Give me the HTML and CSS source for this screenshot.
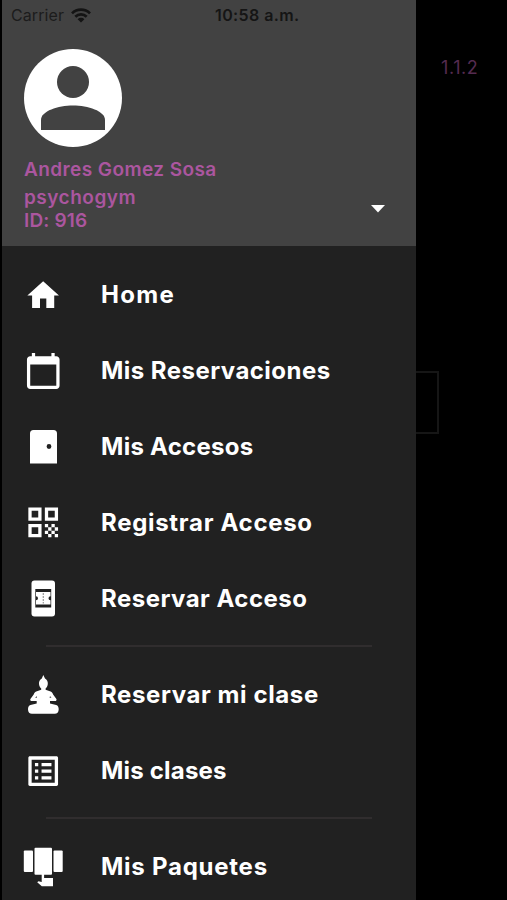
FILE: index.html
```html
<!DOCTYPE html>
<html lang="es">
<head>
<meta charset="utf-8">
<title>Menú</title>
<link rel="stylesheet" href="styles.css">
</head>
<body>
<div class="screen">
  <aside class="drawer">
    <header class="header">
      <div class="status">
        <span class="carrier">Carrier</span>
        <svg class="wifi" width="20" height="15" viewBox="0 0 20 15"><g fill="none" stroke="#141414" stroke-width="2.7"><path d="M1 5.4a12.8 12.8 0 0 1 18 0"/><path d="M4.3 8.8a8.1 8.1 0 0 1 11.4 0"/></g><path fill="#141414" d="M10 14.6 6.6 11.2a4.8 4.8 0 0 1 6.8 0z"/></svg>
        <span class="time">10:58 a.m.</span>
      </div>
      <svg class="avatar" width="98" height="98" viewBox="0 0 98 98"><circle cx="49" cy="49" r="49" fill="#fff"/><g fill="#424242"><circle cx="49" cy="33" r="16"/><path d="M17 81V71C17 62 34 56.500 49 56.500S81 62 81 71v10z"/></g></svg>
      <div class="account">
        <div>
          <div class="name">Andres Gomez Sosa</div>
          <div class="gym">psychogym</div>
          <div class="uid">ID: 916</div>
        </div>
        <svg class="caret" width="14" height="8" viewBox="0 0 14 8"><path fill="#fff" d="M0 0h14L7 7.500z"/></svg>
      </div>
    </header>
    <nav class="menu">
      <a class="item"><svg class="icon" viewBox="0 0 40 40"><path transform="translate(1.200 1.500) scale(1.58)" d="M10 20v-6h4v6h5v-8h3L12 3 2 12h3v8z"/></svg><span class="home">Home</span></a>
      <a class="item"><svg class="icon" viewBox="0 0 40 40"><path transform="translate(.7 .4) scale(1.630)" d="M20 3h-1V1h-2v2H7V1H5v2H4c-1.100 0-2 .9-2 2v16c0 1.100.9 2 2 2h16c1.100 0 2-.9 2-2V5c0-1.100-.9-2-2-2zm0 18H4V8h16z"/></svg><span class="reservations">Mis Reservaciones</span></a>
      <a class="item"><svg class="icon" viewBox="0 0 40 40"><path fill-rule="evenodd" d="M7 36.500V6.500a3.500 3.500 0 0 1 3.500-3.500h20a3.500 3.500 0 0 1 3.500 3.500v30zM26 17.100a2.400 2.400 0 1 0 0 4.800 2.400 2.400 0 0 0 0-4.800z"/></svg><span class="accesses">Mis Accesos</span></a>
      <a class="item"><svg class="icon" viewBox="0 0 40 40"><path fill-rule="evenodd" transform="translate(.4 -.4) scale(1.650)" d="M3 11h8V3H3zm2-6h4v4H5zM3 21h8v-8H3zm2-6h4v4H5zM13 3v8h8V3zm6 6h-4V5h4zM19 19h2v2h-2zM13 13h2v2h-2zM15 15h2v2h-2zM13 17h2v2h-2zM15 19h2v2h-2zM17 17h2v2h-2zM17 13h2v2h-2zM19 15h2v2h-2z"/></svg><span class="register">Registrar Acceso</span></a>
      <a class="item"><svg class="icon" viewBox="0 0 40 40"><rect x="8.500" y="1.500" width="23.500" height="36" rx="3"/><path fill="#212121" d="M12.300 10h15.900v18.500H12.300z"/><path d="M13 13h14.500v4.200a2 2 0 0 0 0 4v4.300H13v-4.300a2 2 0 0 0 0-4z"/><path fill="none" stroke="#999" stroke-width="1.200" stroke-dasharray="2 1" d="M20.300 14v10.500"/></svg><span class="reserve">Reservar Acceso</span></a>
      <hr class="divider">
      <a class="item"><svg class="icon" viewBox="0 0 40 40"><path fill-rule="evenodd" d="M20.300 0l1.700 3.500c2 1.400 3 3.100 2.800 5.400-.2 2-1.200 3.500-2.200 4.600v1.200l5 1.900c1.400.6 2 1.500 2.500 3l3.300 4.300c.6 1-.3 2.100-1.500 2.100h-4.900v2.500l6.200 1.500c1.700.5 2.500 2 2.500 4.300 0 3-1.600 4.500-4 4.500H9c-2.400 0-4-1.500-4-4.500 0-2.300.8-3.800 2.500-4.300l6.200-1.500v-2.500H8.900c-1.200 0-2.100-1.100-1.500-2.100l3.300-4.300c.5-1.500 1.100-2.400 2.500-3l5-1.900v-1.200c-1-1.100-2-2.600-2.200-4.600-.2-2.300.8-4 2.800-5.400zM13.600 21.300l-1.500 1.300 1.900.2zM27 21.300l1.500 1.300-1.900.2z"/></svg><span class="class">Reservar mi clase</span></a>
      <a class="item"><svg class="icon" viewBox="0 0 40 40"><path transform="translate(.4 .4) scale(1.650)" d="M19 5v14H5V5h14m1.100-2H3.900c-.5 0-.9.4-.9.9v16.200c0 .4.4.9.9.9h16.200c.4 0 .9-.5.9-.9V3.900c0-.5-.5-.9-.9-.9zM11 7h6v2h-6zm0 4h6v2h-6zm0 4h6v2h-6zM7 7h2v2H7zm0 4h2v2H7zm0 4h2v2H7z"/></svg><span class="classes">Mis clases</span></a>
      <hr class="divider">
      <a class="item"><svg class="icon" viewBox="0 0 40 40"><rect x=".8" y="3.500" width="9.200" height="21.500" rx="1"/><rect x="11.500" y=".7" width="17.500" height="27" rx="1"/><rect x="30.500" y="3.500" width="9.200" height="21.500" rx="1"/><path d="M18.700 27h2.400v4h8.900v8.300H18.800l-4.600-4.100 1.300-1 3.200.9z"/></svg><span class="packages">Mis Paquetes</span></a>
    </nav>
  </aside>
  <main class="behind">
    <div class="version">1.1.2</div>
    <div class="field"></div>
  </main>
</div>
</body>
</html>
```
FILE: styles.css
```css
* { box-sizing: border-box; }
body { margin: 0; background: #000; font-family: Inter, "Liberation Sans", sans-serif; }
.screen { display: flex; width: 507px; height: 900px; padding-left: 2px; overflow: hidden; }
.drawer { width: 414px; height: 900px; background: #212121; overflow: hidden; }
.header { height: 246px; background: #424242; padding: 0 0 0 22px; }
.status { display: flex; align-items: center; height: 30px; margin-left: -13px; color: #1c1c1c; font-size: 16px; line-height: 30px; }
.carrier { width: 60px; letter-spacing: 0.1px; }
.time { margin-left: 124px; font-weight: 600; color: #151515; letter-spacing: 0.4px; }
.avatar { display: block; margin-top: 19px; }
.account { display: flex; justify-content: space-between; padding-right: 31px; color: #ab569f; font-size: 19px; font-weight: 600; white-space: nowrap; }
.name { margin-top: 10px; line-height: 26px; letter-spacing: 0.42px; }
.gym { margin-top: 2px; line-height: 26px; letter-spacing: 0.5px; }
.uid { line-height: 20px; letter-spacing: 0.15px; }
.caret { margin-top: 58px; }
.menu { padding-top: 10px; }
.item { display: flex; align-items: center; height: 76px; padding-left: 21px; color: #fff; font-size: 24px; font-weight: 700; white-space: nowrap; }
.icon { flex: none; width: 40px; height: 40px; margin: 2px 38px 0 0; fill: #fff; }
.divider { width: 326px; height: 2px; margin: 9px 0 9px 44px; border: 0; background: #302d2e; }
.home { letter-spacing: 1.3px; }
.reservations { letter-spacing: 0.46px; }
.accesses { letter-spacing: 0.27px; }
.register { letter-spacing: 0.7px; }
.reserve { letter-spacing: 0.48px; }
.class { letter-spacing: 0.6px; }
.classes { letter-spacing: 0.2px; }
.packages { letter-spacing: 0.75px; }
.behind { flex: 1; padding-top: 54px; }
.version { margin-left: 25px; color: #552b50; font-size: 18px; line-height: 28px; letter-spacing: 0.6px; }
.field { width: 23px; height: 63px; margin-top: 289px; border: 1px solid #161616; border-width: 2px 2px 2px 0; }
```
